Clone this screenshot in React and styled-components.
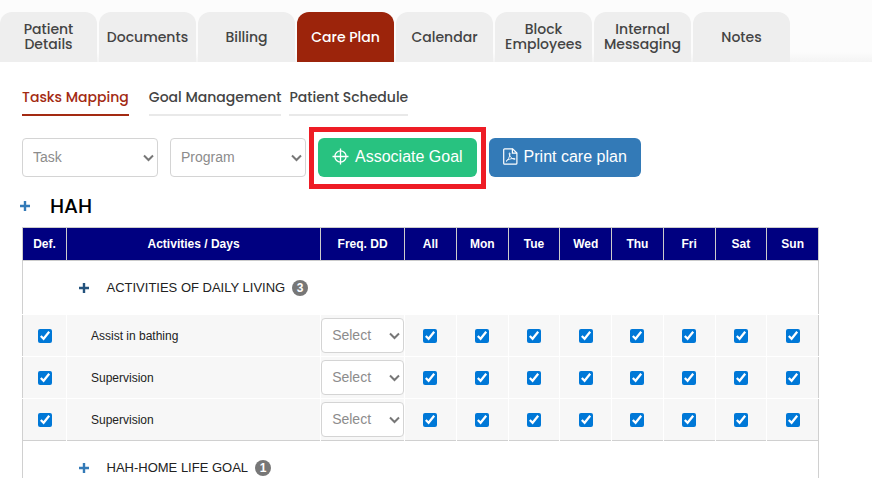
import React, { useState } from 'react';
import styled, { createGlobalStyle } from 'styled-components';

const TABS = ['Patient Details', 'Documents', 'Billing', 'Care Plan', 'Calendar', 'Block Employees', 'Internal Messaging', 'Notes'];
const SUB_TABS = [
    { name: 'Tasks Mapping', gap: 20 },
    { name: 'Goal Management', gap: 8 },
    { name: 'Patient Schedule', gap: 0 }
];
const DAYS = ['All', 'Mon', 'Tue', 'Wed', 'Thu', 'Fri', 'Sat', 'Sun'];
const GROUPS = [
    { name: 'ACTIVITIES OF DAILY LIVING', count: 3, dark: true, tasks: ['Assist in bathing', 'Supervision', 'Supervision'] },
    { name: 'HAH-HOME LIFE GOAL', count: 1, tasks: [] }
];

export default function App(){
    const [activeTab, setActiveTab] = useState('Care Plan');
    const [activeSubTab, setActiveSubTab] = useState('Tasks Mapping');

    return (
        <>
            <GlobalStyle />
            <S.TabBar>
                {TABS.map(tab => (
                    <S.Tab key={tab}
                        type="button"
                        $active={tab === activeTab}
                        onClick={() => setActiveTab(tab)}
                    >
                        {tab}
                    </S.Tab>
                ))}
            </S.TabBar>
            <S.Panel>
                <S.SubNav>
                    {SUB_TABS.map(({ name, gap }) => (
                        <S.SubTab key={name}
                            href="#"
                            $active={name === activeSubTab}
                            $gap={gap}
                            onClick={() => setActiveSubTab(name)}
                        >
                            {name}
                        </S.SubTab>
                    ))}
                </S.SubNav>

                <S.Toolbar>
                    <S.Select className="filter" aria-label="Task">
                        <option>Task</option>
                    </S.Select>
                    <S.Select className="filter" aria-label="Program">
                        <option>Program</option>
                    </S.Select>
                    <S.Highlight>
                        <S.Button type="button" $color="#28c280">
                            <TargetIcon />
                            Associate Goal
                        </S.Button>
                    </S.Highlight>
                    <S.Button type="button" $color="#337ab7">
                        <PdfIcon />
                        Print care plan
                    </S.Button>
                </S.Toolbar>

                <S.Program>
                    <PlusButton label="Expand HAH" />
                    <h2>HAH</h2>
                </S.Program>

                <S.Table>
                    <colgroup>
                        <col className="def" />
                        <col />
                        <col className="freq" />
                        {DAYS.map(day => <col key={day} className="day" />)}
                    </colgroup>
                    <thead>
                        <tr>
                            <th>Def.</th>
                            <th>Activities / Days</th>
                            <th>Freq. DD</th>
                            {DAYS.map(day => <th key={day}>{day}</th>)}
                        </tr>
                    </thead>
                    {GROUPS.map(group => (
                        <TaskGroup key={group.name} {...group} />
                    ))}
                </S.Table>
            </S.Panel>
        </>
    )
}

function TaskGroup({ name, count, dark, tasks }){
    return (
        <tbody>
            <S.GroupRow>
                <td></td>
                <td colSpan={10}>
                    <S.GroupTitle>
                        <PlusButton label={`Expand ${name}`} dark={dark} />
                        <span>{name}</span>
                        <S.Badge>{count}</S.Badge>
                    </S.GroupTitle>
                </td>
            </S.GroupRow>
            {tasks.map((task, i) => (
                <S.TaskRow key={i}>
                    <td><S.Checkbox aria-label={`${task} default`} /></td>
                    <td className="name">{task}</td>
                    <td>
                        <S.Select aria-label={`${task} frequency`}>
                            <option>Select</option>
                        </S.Select>
                    </td>
                    {DAYS.map(day => (
                        <td key={day}><S.Checkbox aria-label={`${task} ${day}`} /></td>
                    ))}
                </S.TaskRow>
            ))}
        </tbody>
    )
}

function PlusButton({ label, dark }){
    return (
        <S.PlusButton type="button" aria-label={label} $dark={dark}>
            <svg width="10" height="10" viewBox="0 0 10 10">
                <path d="M5 0v10M0 5h10" stroke="currentColor" strokeWidth="2.4" />
            </svg>
        </S.PlusButton>
    )
}

function TargetIcon(){
    return (
        <svg width="17" height="17" viewBox="0 0 17 17" fill="none" stroke="currentColor" strokeWidth="1.3">
            <circle cx="8.5" cy="8.5" r="5.6" />
            <path d="M8.5 0.5v16M0.5 8.5h16" />
        </svg>
    )
}

function PdfIcon(){
    return (
        <svg width="15" height="17" viewBox="0 0 15 17" fill="none" stroke="currentColor" strokeWidth="1.2">
            <path d="M1.6 0.8H9.6L13.9 5V15.2Q13.9 16.2 12.9 16.2H1.6Q0.7 16.2 0.7 15.2V1.8Q0.7 0.8 1.6 0.8Z" />
            <path d="M9.4 0.8V5.2H13.9" />
            <path d="M3 13.6C4.6 12.6 7 8.6 7 5.6C7 4.4 6 4.6 6.2 6C6.6 8.6 8.8 11 11.6 11.4C12.6 11.4 12.4 10.4 11.2 10.4C8.8 10.4 4.4 11.4 3.2 13" strokeWidth="0.9" />
        </svg>
    )
}

const chevron = "data:image/svg+xml,%3Csvg xmlns='http://www.w3.org/2000/svg' width='11' height='9' fill='none' stroke='%23777' stroke-width='2'%3E%3Cpath d='M1 2.5l4.5 4.5L10 2.5'/%3E%3C/svg%3E";

const GlobalStyle = createGlobalStyle`
    * {
        box-sizing: border-box;
    }

    body {
        margin: 0;
        background: #fcfcfc;
        color: #222;
        font-family: "Liberation Sans", Arial, sans-serif;
    }

    button, select {
        font-family: inherit;
    }
`

const S = {
    TabBar: styled.nav`
        display: flex;
        gap: 2px;
        padding-top: 12px;
        background: linear-gradient(#fcfcfc 52px, #f4f4f4);
    `,

    Tab: styled.button`
        flex: 0 1 97px;
        min-width: 0;
        height: 50px;
        padding: 0 2px;
        border: 0;
        border-radius: 12px 12px 0 0;
        background: ${({ $active }) => $active ? '#9c240b' : '#eee'};
        color: ${({ $active }) => $active ? '#fff' : '#444'};
        font: 500 14px/15px Poppins, Inter, sans-serif;
    `,

    Panel: styled.main`
        padding: 24px 53px 0 22px;
        background: #fff;
    `,

    SubNav: styled.nav`
        display: flex;
    `,

    SubTab: styled.a`
        height: 30px;
        margin-right: ${({ $gap }) => $gap}px;
        border-bottom: 2px solid ${({ $active }) => $active ? '#a32a12' : '#e9e9e9'};
        color: ${({ $active }) => $active ? '#a32a12' : '#444'};
        font: 500 14px/22px Poppins, Inter, sans-serif;
        text-decoration: none;
        white-space: nowrap;
    `,

    Toolbar: styled.div`
        display: flex;
        gap: 12px;
        margin-top: 22px;

        .filter{
            width: 136px;
            height: 39px;
        }
    `,

    Select: styled.select`
        appearance: none;
        display: block;
        width: 100%;
        height: 35px;
        padding: 0 10px 2px;
        border: 1px solid #d4d4d4;
        border-radius: 4px;
        background: #fff url("${chevron}") no-repeat right 3px center;
        color: #8c8c8c;
        font-size: 14px;
    `,

    // frame drawn over the toolbar, around the button it points out
    Highlight: styled.div`
        position: relative;

        &::after{
            content: '';
            position: absolute;
            inset: -11px -9px -12px;
            border: 5px solid #ee1c25;
            pointer-events: none;
        }
    `,

    Button: styled.button`
        display: flex;
        align-items: center;
        gap: 6px;
        height: 39px;
        padding: 0 14px 2px;
        border: 0;
        border-radius: 6px;
        background: ${({ $color }) => $color};
        color: #fff;
        font-size: 16px;
        white-space: nowrap;
    `,

    Program: styled.div`
        display: flex;
        align-items: center;
        gap: 20px;
        margin: 14px 0 6px -2px;

        h2{
            margin: 0;
            color: #000;
            font: 500 20px/30px Poppins, Inter, sans-serif;
        }
    `,

    PlusButton: styled.button`
        display: flex;
        padding: 0;
        border: 0;
        background: none;
        color: ${({ $dark }) => $dark ? '#23527c' : '#337ab7'};
    `,

    Table: styled.table`
        width: 100%;
        table-layout: fixed;
        border-collapse: collapse;
        border: 1px solid #d0d0d0;

        .def{
            width: 44px;
        }

        .freq{
            width: 84px;
        }

        .day{
            width: 6.5%;
        }

        th{
            height: 33px;
            padding: 0;
            border: 1px solid #ccc;
            background: #000080;
            color: #fff;
            font-size: 12px;
        }

        td{
            padding: 0;
            font-size: 13px;
        }

        tbody{
            border-bottom: 1px solid #d0d0d0;
        }
    `,

    GroupRow: styled.tr`
        height: 54px;
    `,

    GroupTitle: styled.div`
        display: flex;
        align-items: center;
        padding-left: 12px;

        span{
            margin: 0 7px 0 18px;
        }
    `,

    Badge: styled.b`
        min-width: 16px;
        padding: 0 4px;
        border-radius: 8px;
        background: #777;
        color: #fff;
        font-size: 12px;
        line-height: 16px;
        text-align: center;
    `,

    TaskRow: styled.tr`
        height: 42px;

        td{
            border-top: 1px solid #fff;
            background: #f7f7f7;
            text-align: center;
        }

        td + td{
            border-left: 1px solid #fff;
        }

        .name{
            padding-left: 24px;
            font-size: 12px;
            text-align: left;
        }
    `,

    Checkbox: styled.input.attrs({ type: 'checkbox', defaultChecked: true })`
        display: block;
        width: 14px;
        height: 14px;
        margin: 0 auto;
        accent-color: #0078d7;
    `
}
